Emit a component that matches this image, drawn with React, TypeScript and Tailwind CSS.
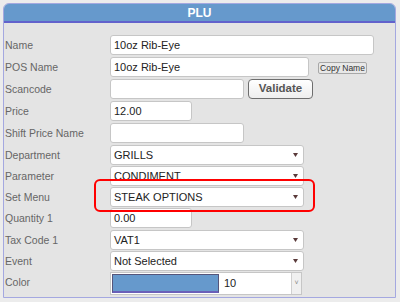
import React from "react";

type Row = {
  label: string;
  h: string;
  kind: "input" | "select" | "color";
  value?: string;
  w?: string;
  extra?: "copy" | "validate";
};

const rows: Row[] = [
  { label: "Name", h: "h-[22px]", kind: "input", value: "10oz Rib-Eye", w: "w-[264px]" },
  { label: "POS Name", h: "h-[22px]", kind: "input", value: "10oz Rib-Eye", w: "w-[199px]", extra: "copy" },
  { label: "Scancode", h: "h-[22px]", kind: "input", value: "", w: "w-[134px]", extra: "validate" },
  { label: "Price", h: "h-[22px]", kind: "input", value: "12.00", w: "w-[82px]" },
  { label: "Shift Price Name", h: "h-[22px]", kind: "input", value: "", w: "w-[134px]" },
  { label: "Department", h: "h-[21px]", kind: "select", value: "GRILLS" },
  { label: "Parameter", h: "h-[21px]", kind: "select", value: "CONDIMENT" },
  { label: "Set Menu", h: "h-[21px]", kind: "select", value: "STEAK OPTIONS" },
  { label: "Quantity 1", h: "h-[22px]", kind: "input", value: "0.00", w: "w-[82px]" },
  { label: "Tax Code 1", h: "h-[21px]", kind: "select", value: "VAT1" },
  { label: "Event", h: "h-[21px]", kind: "select", value: "Not Selected" },
  { label: "Color", h: "h-[24px]", kind: "color", value: "10" },
];

const Field = ({ row }: { row: Row }) => {
  if (row.kind === "select") {
    return (
      <div className="flex h-[20px] w-[194px] items-center justify-between rounded-[3px] border border-[#c6c6c6] bg-white pl-[3px] pr-[5px] text-[11px] text-[#222]">
        <span>{row.value}</span>
        <svg width="5" height="4" viewBox="0 0 5 4">
          <path d="M0 0 H5 L2.5 4 Z" fill="#5a3a3a" />
        </svg>
      </div>
    );
  }
  if (row.kind === "color") {
    return (
      <div className="flex h-[23px] w-[192px] items-center border border-[#c6c6c6] bg-white pl-[1px] text-[11px] text-[#222]">
        <div className="h-[19px] w-[107px] border border-[#55557a] border-b-[2px] border-b-[#6a5fb8] bg-[#6699cc]" />
        <span className="ml-[5px] flex-1">{row.value}</span>
        <div className="flex h-[21px] w-[10px] items-center justify-center border-l border-[#d0d0d0] bg-[#f0f0f0] text-[7px] text-[#888]">
          ˅
        </div>
      </div>
    );
  }
  return (
    <div
      className={`flex h-[20px] ${row.w} items-center rounded-[3px] border border-[#c6c6c6] bg-white pl-[3px] text-[11px] text-[#222]`}
    >
      {row.value}
    </div>
  );
};

export default function App() {
  return (
    <div
      className="relative h-[302px] w-[400px] overflow-hidden bg-[#ececec] pl-[3px] pt-[3px]"
      style={{ fontFamily: '"Liberation Sans", Arial, sans-serif' }}
    >
      <div className="h-[295px] w-[393px] rounded-t-[6px] border border-[#a4a8e0] bg-[#e4e4e4]">
        <div className="flex h-[19px] items-center justify-center rounded-t-[5px] border-b-2 border-[#6262cc] bg-[#6699cc] text-[12px] font-bold text-white">
          PLU
        </div>
        <div className="flex flex-col pt-[12px]">
          {rows.map((row) => (
            <div key={row.label} className={`flex ${row.h} items-start`}>
              <div className="w-[106px] pl-[1px] pt-[4px] text-[10.5px] leading-[12px] text-[#666]">
                {row.label}
              </div>
              <Field row={row} />
              {row.extra === "copy" && (
                <div className="ml-[9px] mt-[5px] flex h-[12px] w-[49px] items-center justify-center rounded-[2px] border border-[#a8a8a8] bg-[#e8e8e8] text-[8.5px] text-[#333]">
                  Copy Name
                </div>
              )}
              {row.extra === "validate" && (
                <div className="ml-[4px] flex h-[20px] w-[65px] items-center justify-center rounded-[4px] border border-[#6e6e6e] bg-gradient-to-b from-white to-[#eeeeee] text-[11.5px] font-bold text-[#555]">
                  Validate
                </div>
              )}
            </div>
          ))}
        </div>
      </div>
      <div className="absolute left-[94px] top-[179px] h-[33px] w-[221px] rounded-[6px] border-2 border-[#ff0000]" />
    </div>
  );
}
